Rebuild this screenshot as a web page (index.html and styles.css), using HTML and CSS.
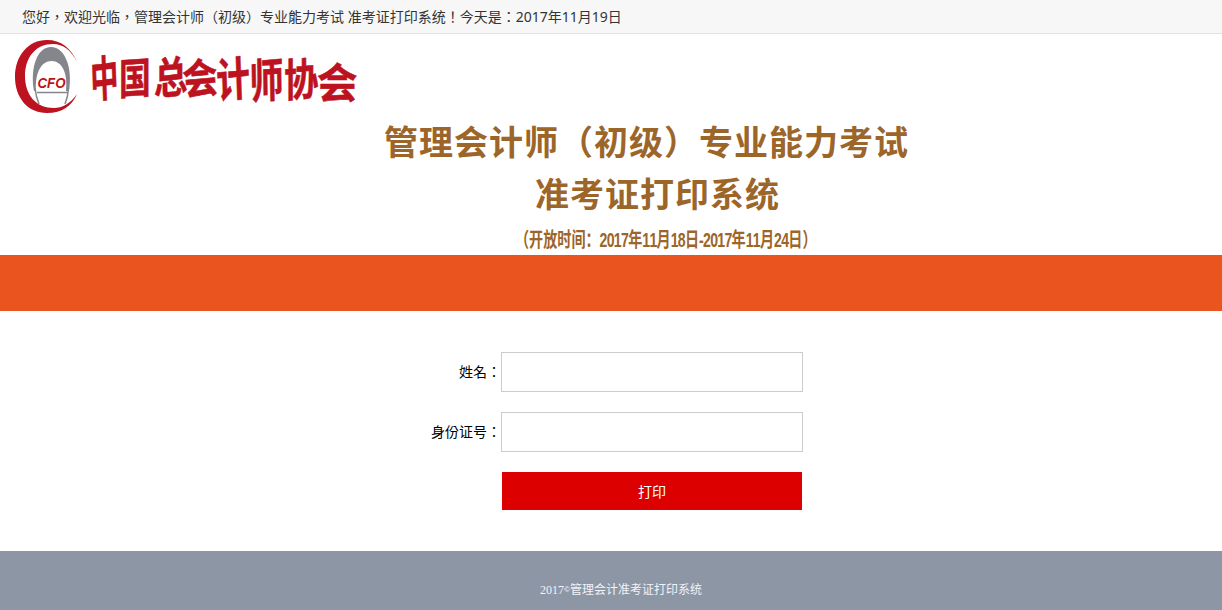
FILE: index.html
```html
<!DOCTYPE html>
<html lang="zh-CN">
<head>
  <meta charset="utf-8">
  <title>准考证打印系统</title>
  <link rel="stylesheet" href="styles.css">
</head>
<body>
  <div class="topbar" lang="zh-TW">您好，欢迎光临，管理会计师（初级）专业能力考试 准考证打印系统！今天是：2017年11月19日</div>
  <div class="header">
    <svg class="logo" width="360" height="82" viewBox="0 0 360 82">
      <path d="M69 24C63 10 53 2 39 2C20 2 7 18 7 39C7 60 20 75 39 75C54 75 64 68 69 56C62 66 54 70 46 70C28 70 17 57 17 38C17 19 28 6 45 6C55 6 63 12 69 24Z" fill="#bd1220"/>
      <path d="M26 53C22 30 29 9 43 9C57 9 65 30 61 53L58 53C60 35 54 23 43.500 23C33 23 27 35 28 53Z" fill="#85868b"/>
      <path d="M29 54.500H60M27 50Q28 59 31 66M60.500 50Q60 59 57 66" fill="none" stroke="#85868b" stroke-width="1.500"/>
      <text class="cfo" x="29.500" y="50" textLength="28" lengthAdjust="spacingAndGlyphs">CFO</text>
      <g class="brush">
        <text transform="translate(83 60) rotate(-7) skewX(-5) scale(.94 1.6)">中</text>
        <text transform="translate(111 57) rotate(-4) skewX(-4) scale(1.06 1.42)">国</text>
        <text transform="translate(146 57) rotate(-6) skewX(-6) scale(1.12 1.44)">总</text>
        <text transform="translate(176 57) rotate(-5) scale(1.17 1.38)">会</text>
        <text transform="translate(209 60) rotate(-6) skewX(-4) scale(1.12 1.55)">计</text>
        <text transform="translate(242 61) rotate(-5) skewX(-4) scale(1.13 1.55)">师</text>
        <text transform="translate(276 59) rotate(-4) skewX(-4) scale(1.15 1.48)">协</text>
        <text transform="translate(309 60) rotate(0) scale(1.35 1.38)">会</text>
      </g>
    </svg>
    <h1>管理会计师（初级）专业能力考试</h1>
    <h2>准考证打印系统</h2>
    <p class="open-time">（开放时间：<span>2017</span>年<span>11</span>月<span>18</span>日<span>-2017</span>年<span>11</span>月<span>24</span>日）</p>
  </div>
  <div class="nav"></div>
  <form class="login" lang="zh-TW">
    <div class="form-group">
      <label for="name">姓名：</label>
      <input type="text" id="name">
    </div>
    <div class="form-group">
      <label for="idcard">身份证号：</label>
      <input type="text" id="idcard">
    </div>
    <button type="button">打印</button>
  </form>
  <div class="footer">2017<span class="copy">©</span>管理会计准考证打印系统</div>
</body>
</html>
```

FILE: styles.css
```css
* {
  box-sizing: border-box;
}
body {
  margin: 0;
  height: 610px;
  overflow: hidden;
  background: #fff;
  font-family: "Noto Sans", "Noto Sans CJK TC", sans-serif;
  font-size: 14px;
}
.topbar {
  height: 34px;
  padding-left: 22px;
  line-height: 33px;
  color: #333;
  background: #f7f7f7;
  border-bottom: 1px solid #e2e2e2;
  white-space: nowrap;
}
.header {
  height: 221px;
  padding-top: 4px;
  color: #9c6529;
  font-family: "Noto Sans CJK SC", sans-serif;
}
.logo {
  display: block;
  margin-left: 8px;
  overflow: visible;
}
.cfo {
  font: italic bold 14px "Liberation Sans", sans-serif;
  fill: #bd1220;
}
.brush text {
  font: bold 30px "Noto Sans CJK SC", sans-serif;
  fill: #bd1220;
  stroke: #bd1220;
  stroke-width: .4;
  stroke-linejoin: round;
}
h1,
h2 {
  margin: 0;
  font-size: 34px;
  font-weight: bold;
  letter-spacing: 1px;
  line-height: 52px;
  white-space: nowrap;
}
h1 {
  margin-top: -5px;
  padding-left: 384px;
}
h2 {
  padding-left: 535px;
}
.open-time {
  margin: 3px 0 0 515px;
  width: 440px;
  font-size: 20px;
  font-weight: bold;
  line-height: 34px;
  white-space: nowrap;
  transform: scaleX(.705);
  transform-origin: 0 0;
}
.open-time span {
  font-family: "Liberation Sans", sans-serif;
  font-kerning: none;
  letter-spacing: -1px;
}
.nav {
  height: 56px;
  background: #e9541f;
}
.login {
  height: 240px;
  padding: 41px 0 0 381px;
}
.form-group {
  display: flex;
  align-items: center;
  margin-bottom: 20px;
}
label {
  width: 120px;
  padding-bottom: 2px;
  text-align: right;
}
input {
  width: 302px;
  height: 40px;
  padding: 0 8px;
  border: 1px solid #ccc;
}
button {
  display: block;
  width: 300px;
  height: 38px;
  margin-left: 121px;
  padding: 0;
  border: none;
  background: #d00;
  color: #fff;
  font: inherit;
}
.footer {
  height: 59px;
  padding: 30px 0 0 540px;
  line-height: 18px;
  background: #8c96a5;
  color: #f0f3f8;
  font-family: "Liberation Serif", "Noto Sans CJK SC", serif;
  font-size: 12px;
}
.copy {
  display: inline-block;
  width: 6px;
  font-size: 8px;
  font-weight: bold;
  vertical-align: 2px;
  line-height: 1;
}
```
